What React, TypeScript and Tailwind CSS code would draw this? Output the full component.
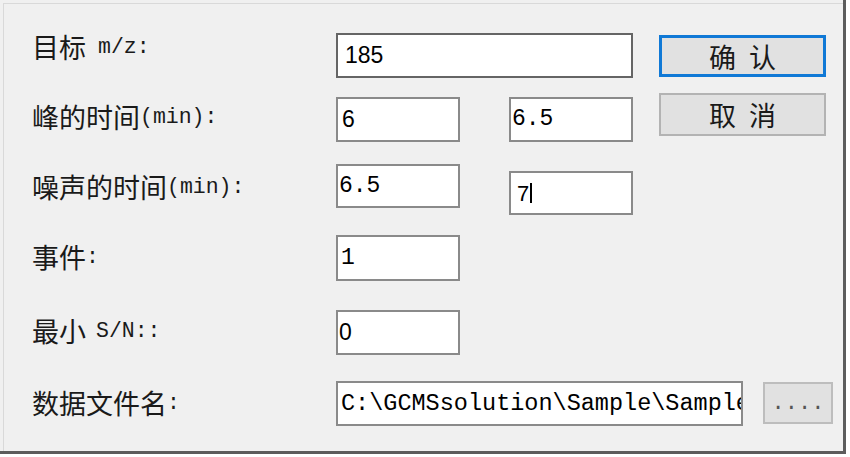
import React from "react";

const cjk = "font-['Noto_Sans_CJK_SC',sans-serif]";
const mono = "font-['Liberation_Mono','Noto_Sans_CJK_SC',monospace]";
const sans = "font-['Liberation_Sans','Noto_Sans_CJK_SC',sans-serif]";

const Label = ({
    zh,
    en,
    gap,
    className,
}: {
    zh: string;
    en?: string;
    gap?: string;
    className?: string;
}) => (
    <div className={`w-[304px] shrink-0 h-[30px] flex items-center whitespace-nowrap text-[#1a1a1a] ${className}`}>
        <span className={`${cjk} text-[27px] leading-[30px]`}>{zh}</span>
        {en && <span className={`${mono} text-[21.5px] leading-[30px] ${gap}`}>{en}</span>}
    </div>
);

const Field = ({
    value,
    className,
    font = sans,
}: {
    value: React.ReactNode;
    className?: string;
    font?: string;
}) => (
    <div
        className={`bg-white border-2 border-[#8a8a8a] flex items-center overflow-hidden whitespace-nowrap text-black ${font} ${className}`}
    >
        {value}
    </div>
);

const App = () => {
    return (
        <div className="w-[850px] h-[457px] bg-white overflow-hidden">
            <div className="w-[846px] h-[454px] bg-[#f0f0f0] border-r-[3px] border-b-[3px] border-[#5c5c5c] pl-[3px] pt-[3px]">
                <div className="h-full border-l border-t border-[#d9d9d9] pl-[28px] flex flex-col">
                    {/* target m/z */}
                    <div className="mt-[29px] flex items-start">
                        <Label zh="目标" en="m/z:" gap="ml-[12px]" className="mt-[-1px]" />
                        <Field
                            value="185"
                            className="w-[297px] h-[45px] pl-[7px] text-[23px] border-[#656565]"
                        />
                        <button className="ml-[26px] mt-[2px] w-[167px] h-[42px] bg-[#e1e1e1] border-[3px] border-[#1079d6] flex items-center justify-center gap-[13px] text-[#1a1a1a]">
                            <span className={`${cjk} text-[27px] leading-none`}>确</span>
                            <span className={`${cjk} text-[27px] leading-none`}>认</span>
                        </button>
                    </div>

                    {/* peak time */}
                    <div className="mt-[19px] flex items-start">
                        <Label zh="峰的时间" en="(min):" className="mt-[5px]" />
                        <Field value="6" className="w-[124px] h-[45px] pl-[4px] text-[23px]" />
                        <Field
                            value="6.5"
                            font={mono}
                            className="ml-[49px] w-[124px] h-[45px] pl-[1px] text-[23px]"
                        />
                        <button className="ml-[26px] mt-[-4px] w-[167px] h-[43px] bg-[#e1e1e1] border-2 border-[#b3b3b3] flex items-center justify-center gap-[13px] text-[#1a1a1a]">
                            <span className={`${cjk} text-[27px] leading-none`}>取</span>
                            <span className={`${cjk} text-[27px] leading-none`}>消</span>
                        </button>
                    </div>

                    {/* noise time */}
                    <div className="mt-[22px] flex items-start">
                        <Label zh="噪声的时间" en="(min):" className="mt-[8px]" />
                        <Field
                            value="6.5"
                            font={mono}
                            className="w-[124px] h-[44px] pl-[1px] text-[23px]"
                        />
                        <Field
                            value={
                                <>
                                    <span>7</span>
                                    <span className="ml-[1px] w-[2px] h-[20px] bg-black" />
                                </>
                            }
                            className="ml-[49px] mt-[7px] w-[124px] h-[44px] pl-[6px] text-[22px] border-[#4d9ae0]"
                        />
                    </div>

                    {/* events */}
                    <div className="mt-[20px] flex items-start">
                        <Label zh="事件" en=":" className="mt-[7px]" />
                        <Field
                            value="1"
                            font={mono}
                            className="w-[124px] h-[46px] pl-[3px] text-[23px]"
                        />
                    </div>

                    {/* min S/N */}
                    <div className="mt-[29px] flex items-start">
                        <Label zh="最小" en="S/N::" gap="ml-[10px]" className="mt-[6px]" />
                        <Field value="0" className="w-[124px] h-[45px] pl-[1px] text-[23px]" />
                    </div>

                    {/* data file */}
                    <div className="mt-[26px] flex items-start">
                        <Label zh="数据文件名" en=":" className="mt-[7px]" />
                        <Field
                            value="C:\GCMSsolution\Sample\Sample"
                            font={mono}
                            className="w-[407px] h-[45px] pl-[3px] text-[23.5px]"
                        />
                        <button className="ml-[20px] mt-[1px] w-[70px] h-[42px] bg-[#e1e1e1] border-2 border-[#bdbdbd] flex items-center justify-center">
                            <span className={`${mono} text-[22px] leading-none text-[#555] mt-[2px]`}>....</span>
                        </button>
                    </div>
                </div>
            </div>
        </div>
    );
};

export default App;
